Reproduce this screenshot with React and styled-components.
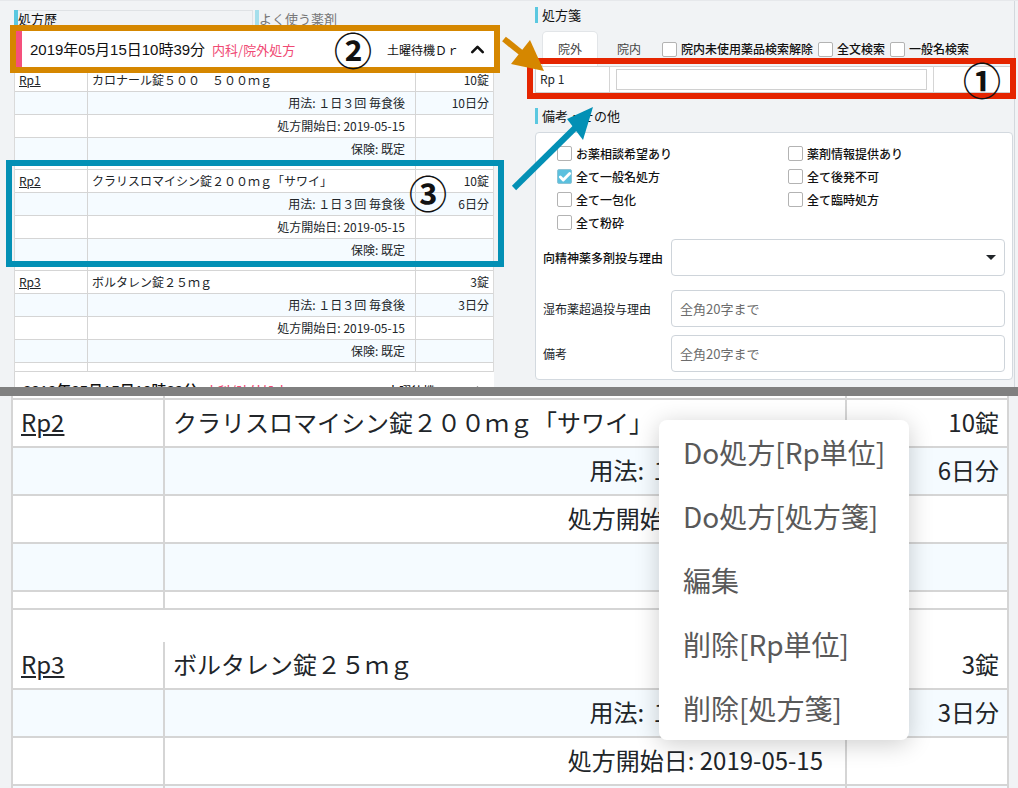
import React from "react";
import styled, { createGlobalStyle } from "styled-components";
import { Check, ChevronUp } from "lucide-react";

const GlobalStyle = createGlobalStyle`
  * { box-sizing: border-box; }
  body {
    margin: 0;
    background: #f1f3f5;
    color: #212529;
    font-family: "Noto Sans CJK JP", "Noto Sans", sans-serif;
    font-size: 12px;
    line-height: 16px;
  }
  button, input, select { font: inherit; color: inherit; }
`;

const Page = styled.main`
  display: flex;
  flex-direction: column;
  height: 100vh;
  overflow: hidden;
`;

const Overview = styled.section`
  position: relative;
  flex: none;
  height: 387px;
  overflow: hidden;
  display: grid;
  grid-template-columns: minmax(0, 1fr) minmax(0, 1fr);
  column-gap: 41px;
  padding: 0 3px 0 14px;
  border-top: 1px solid #e6e8eb;
`;

const Divider = styled.hr`
  flex: none;
  width: 100%;
  height: 9px;
  margin: 0;
  border: 0;
  background: #808080;
`;

/* History column */

const History = styled.div`
  position: relative;
  padding-top: 9px;
`;

const HistoryTabs = styled.div`
  display: grid;
  grid-template-columns: 1fr 1fr;
  column-gap: 2px;
`;

const HistoryTab = styled.button`
  height: 21px;
  padding: 0 0 4px;
  text-align: left;
  font-size: 13px;
  line-height: 16px;
  border: 0;
  border-left: 4px solid ${(p) => (p.$active ? "#5bc8e0" : "#a5dfec")};
  background: none;
  color: ${(p) => (p.$active ? "#111" : "#777")};
  box-shadow: ${(p) => (p.$active ? "inset -1px 1px #dfe2e5" : "none")};
`;

const VisitHeader = styled.header`
  position: relative;
  display: flex;
  align-items: center;
  height: 37px;
  margin-left: ${(p) => (p.$open ? "2px" : "0")};
  padding: 0 6px 0 8px;
  background: #fff;
  border-left: ${(p) => (p.$open ? "6px solid #f5507c" : "1px solid #d6d6d6")};
  color: #111;
  font-weight: ${(p) => (p.$open ? 400 : 500)};
`;

const VisitDate = styled.span`
  font-family: "Liberation Sans", "Noto Sans CJK JP", sans-serif;
  font-size: 15px;
  white-space: nowrap;
`;

const VisitKind = styled.span`
  flex: 1;
  margin-left: 7px;
  font-size: 13px;
  color: #f04a74;
  white-space: nowrap;
`;

const Doctor = styled.span`
  width: 72px;
  white-space: nowrap;
`;

const Toggle = styled.button`
  display: grid;
  margin-left: 8px;
  padding: 0;
  border: 0;
  background: none;
`;

const RxTable = styled.table`
  width: 100%;
  table-layout: fixed;
  border-collapse: separate;
  border-spacing: 0;
  background: #fff;
  border: solid ${(p) => (p.$large ? "#d5d5d5" : "#dadada")};
  border-width: ${(p) => (p.$large ? "0 2px" : "1px 1px 0")};
  font-size: ${(p) => (p.$large ? "24px" : "12px")};
  line-height: ${(p) => (p.$large ? "32px" : "16px")};

  td {
    height: ${(p) => (p.$large ? "48px" : "23px")};
    padding: ${(p) => (p.$large ? "0 8px 2px" : "0 4px")};
    border-bottom: ${(p) => (p.$large ? "2px" : "1px")} solid #d5d5d5;
    white-space: nowrap;
  }
  td + td { border-left: ${(p) => (p.$large ? "2px" : "1px")} solid #d5d5d5; }
`;

const LabelCol = styled.col`
  width: ${(p) => (p.$large ? "150px" : "72px")};
`;

const AmountCol = styled.col`
  width: ${(p) => (p.$large ? "162px" : "78px")};
`;

const Row = styled.tr`
  background: ${(p) => (p.$tint ? "#f5fbff" : "#fff")};
`;

const SpacerRow = styled.tr`
  && td { height: ${(p) => p.$height}px; padding: 0; line-height: 0; }
`;

const BlankRow = styled.tr`
  && td { height: 32px; border: 0; }
`;

const DetailCell = styled.td`
  && { text-align: right; padding-right: ${(p) => (p.$large ? "22px" : "10px")}; }
`;

const AmountCell = styled.td`
  text-align: right;
`;

const RxLink = styled.a`
  color: inherit;
  text-decoration: underline;
`;

/* Prescription column */

const Prescription = styled.div`
  padding: 6px 1px 0 0;
  border-right: 1px solid #d3d8dd;
`;

const SectionTitle = styled.h2`
  margin: 0;
  padding-left: 4px;
  border-left: 3px solid #5bc8e0;
  font-size: 13px;
  line-height: 16px;
  font-weight: 400;
  color: #111;
`;

const Toolbar = styled.div`
  display: flex;
  align-items: flex-end;
  gap: 5px;
  height: 43px;
  padding-left: 8px;
`;

const PlaceTab = styled.button`
  width: 54px;
  height: 34px;
  padding: 0;
  border: 0;
  border-radius: 4px 4px 0 0;
  background: ${(p) => (p.$active ? "#fff" : "none")};
  box-shadow: ${(p) => (p.$active ? "0 0 0 1px #e2e5e8" : "none")};
  color: #444;
`;

const ToolbarChecks = styled.div`
  display: flex;
  gap: 5px;
  height: 34px;
  align-items: center;
  margin-left: 1px;
`;

const CheckLabel = styled.label`
  display: flex;
  align-items: center;
  gap: 4px;
  white-space: nowrap;
  color: #111;
  font-weight: 500;
`;

const CheckSlot = styled.span`
  display: grid;
  place-items: center;
  > * { grid-area: 1 / 1; }
  svg { pointer-events: none; }
`;

const CheckInput = styled.input`
  appearance: none;
  width: 15px;
  height: 15px;
  margin: 0;
  border: 1px solid #b3b3b3;
  border-radius: 2px;
  background: #fff;
  &:checked { background: #5bc0de; border-color: #8dc4d6; }
`;

const RxEntry = styled.div`
  position: relative;
  display: grid;
  grid-template-columns: 73px 1fr 78px;
  height: 27px;
  background: #fff;
  border: 1px solid #d0d0d0;
  margin-bottom: 15px;
`;

const EntryLabel = styled.label`
  padding: 4px;
`;

const EntryField = styled.div`
  padding: 2px 6px;
  border: solid #d5d5d5;
  border-width: 0 1px;
  input {
    display: block;
    width: 100%;
    height: 21px;
    border: 1px solid #d0d0d0;
  }
`;

const Card = styled.div`
  margin-top: 8px;
  padding: 9px 7px 7px;
  background: #fff;
  border: 1px solid #d3d9df;
  border-radius: 4px;
`;

const OptionGrid = styled.div`
  display: grid;
  grid-template-columns: 1fr 1fr;
  grid-auto-rows: 23px;
  column-gap: 14px;
  padding-left: 14px;
  margin-bottom: 5px;
`;

const Field = styled.div`
  display: grid;
  grid-template-columns: 128px 1fr;
  align-items: center;
  margin-top: ${(p) => p.$gap || 0}px;
`;

const fieldBox = `
  width: 100%;
  height: 37px;
  padding: 0 8px;
  border: 1px solid #ced4da;
  border-radius: 4px;
  background: #fff;
  font-size: 13px;
`;

const TextField = styled.input`
  ${fieldBox}
  &::placeholder { color: #6c6c6c; opacity: 1; }
`;

const SelectWrap = styled.div`
  display: grid;
  align-items: center;
  > * { grid-area: 1 / 1; }
  svg { justify-self: end; margin-right: 9px; pointer-events: none; }
`;

const Select = styled.select`
  ${fieldBox}
  appearance: none;
`;

/* Annotations laid over the form */

const Frame = styled.div`
  position: absolute;
  inset: ${(p) => p.$inset};
  height: ${(p) => p.$height};
  border: 6px solid ${(p) => p.$color};
  pointer-events: none;
`;

const Marker = styled.b`
  position: absolute;
  top: ${(p) => p.$top};
  right: ${(p) => p.$right};
  width: 40px;
  height: 40px;
  font-size: 38px;
  line-height: 40px;
  font-weight: 700;
  text-align: center;
  color: #111;
`;

const Arrows = styled.svg`
  position: absolute;
  top: -1px;
  left: calc(50% - 9px);
`;

/* Enlarged list with its context menu */

const Detail = styled.section`
  position: relative;
  flex: 1;
  min-height: 0;
  overflow: hidden;
  padding: 0 9px 0 11px;
`;

const Menu = styled.div`
  position: absolute;
  top: 24px;
  right: 109px;
  width: 250px;
  display: flex;
  flex-direction: column;
  background: #fff;
  border-radius: 8px;
  box-shadow: 0 4px 24px rgba(0, 0, 0, 0.2);
`;

const MenuItem = styled.button`
  height: 64px;
  padding: 0 0 0 24px;
  border: 0;
  background: none;
  text-align: left;
  font-size: 28px;
  line-height: 40px;
  color: #595959;
  white-space: nowrap;
`;

const drugs = [
  { id: "Rp1", name: "カロナール錠５００　５００ｍｇ", amount: "10錠", days: "10日分" },
  { id: "Rp2", name: "クラリスロマイシン錠２００ｍｇ「サワイ」", amount: "10錠", days: "6日分" },
  { id: "Rp3", name: "ボルタレン錠２５ｍｇ", amount: "3錠", days: "3日分" },
];

const menuItems = ["Do処方[Rp単位]", "Do処方[処方箋]", "編集", "削除[Rp単位]", "削除[処方箋]"];

const options = [
  ["お薬相談希望あり"],
  ["薬剤情報提供あり"],
  ["全て一般名処方", true],
  ["全て後発不可"],
  ["全て一包化"],
  ["全て臨時処方"],
  ["全て粉砕"],
];

function CheckBox({ label, checked }) {
  return (
    <CheckLabel>
      <CheckSlot>
        <CheckInput type="checkbox" defaultChecked={checked} />
        {checked && <Check size={14} strokeWidth={5} color="#fff" />}
      </CheckSlot>
      {label}
    </CheckLabel>
  );
}

function Spacer({ height }) {
  return (
    <SpacerRow $height={height}>
      <td />
      <td />
      <td />
    </SpacerRow>
  );
}

function DrugRows({ drug, large }) {
  return (
    <>
      <Row>
        <td><RxLink href="#">{drug.id}</RxLink></td>
        <td>{drug.name}</td>
        <AmountCell>{drug.amount}</AmountCell>
      </Row>
      <Row $tint>
        <td />
        <DetailCell $large={large}>用法: １日３回 毎食後</DetailCell>
        <AmountCell>{drug.days}</AmountCell>
      </Row>
      <Row>
        <td />
        <DetailCell $large={large}>処方開始日: 2019-05-15</DetailCell>
        <td />
      </Row>
      <Row $tint>
        <td />
        <DetailCell $large={large}>{large ? "" : "保険: 既定"}</DetailCell>
        <td />
      </Row>
      <Spacer height={large ? 18 : 9} />
    </>
  );
}

function Columns({ large }) {
  return (
    <colgroup>
      <LabelCol $large={large} />
      <col />
      <AmountCol $large={large} />
    </colgroup>
  );
}

function Visit({ open }) {
  return (
    <VisitHeader $open={open}>
      <VisitDate>2019年05月15日10時39分</VisitDate>
      <VisitKind>内科/院外処方</VisitKind>
      <Doctor>土曜待機Ｄｒ</Doctor>
      <Toggle aria-label="開閉">
        <ChevronUp size={21} strokeWidth={3} />
      </Toggle>
      {open && <Frame $inset="-6px -6px auto -12px" $height="48px" $color="#d58700" />}
      {open && <Marker $top="-2px" $right="121px">②</Marker>}
    </VisitHeader>
  );
}

export default function App() {
  return (
    <Page>
      <GlobalStyle />
      <Overview>
        <History>
          <HistoryTabs>
            <HistoryTab $active>処方歴</HistoryTab>
            <HistoryTab>よく使う薬剤</HistoryTab>
          </HistoryTabs>
          <Visit open />
          <RxTable>
            <Columns />
            <tbody>
              {drugs.map((d) => <DrugRows key={d.id} drug={d} />)}
            </tbody>
          </RxTable>
          <Visit />
          <Frame $inset="159px -10px auto -8px" $height="107px" $color="#0390b5" />
          <Marker $top="171px" $right="46px">③</Marker>
        </History>

        <Prescription>
          <SectionTitle>処方箋</SectionTitle>
          <Toolbar>
            <PlaceTab $active>院外</PlaceTab>
            <PlaceTab>院内</PlaceTab>
            <ToolbarChecks>
              <CheckBox label="院内未使用薬品検索解除" />
              <CheckBox label="全文検索" />
              <CheckBox label="一般名検索" />
            </ToolbarChecks>
          </Toolbar>
          <RxEntry>
            <EntryLabel htmlFor="rp">Rp 1</EntryLabel>
            <EntryField><input id="rp" type="text" /></EntryField>
            <Frame $inset="-9px -4px auto -9px" $height="41px" $color="#e52500" />
            <Marker $top="-8px" $right="10px">①</Marker>
          </RxEntry>
          <SectionTitle>備考・その他</SectionTitle>
          <Card>
            <OptionGrid>
              {options.map(([label, checked]) => (
                <CheckBox key={label} label={label} checked={checked} />
              ))}
            </OptionGrid>
            <Field>
              <CheckLabel htmlFor="psych">向精神薬多剤投与理由</CheckLabel>
              <SelectWrap>
                <Select id="psych" />
                <svg width="10" height="5" viewBox="0 0 10 5" aria-hidden="true">
                  <path d="M0 0h10L5 5z" fill="#212529" />
                </svg>
              </SelectWrap>
            </Field>
            <Field $gap={14}>
              <label htmlFor="patch">湿布薬超過投与理由</label>
              <TextField id="patch" placeholder="全角20字まで" />
            </Field>
            <Field $gap={8}>
              <label htmlFor="note">備考</label>
              <TextField id="note" placeholder="全角20字まで" />
            </Field>
          </Card>
        </Prescription>

        <Arrows width="100" height="200" viewBox="500 0 100 200" aria-hidden="true">
          <path d="M504 39L524 55" stroke="#d58700" strokeWidth="6" />
          <path d="M544 71L530 40L511 64z" fill="#d58700" />
          <path d="M514 188L578 125" stroke="#0390b5" strokeWidth="6" />
          <path d="M593 107L567 119L583 140z" fill="#0390b5" />
        </Arrows>
      </Overview>

      <Divider />

      <Detail>
        <RxTable $large>
          <Columns large />
          <tbody>
            <Spacer height={4} />
            <DrugRows drug={drugs[1]} large />
            <BlankRow><td colSpan={3} /></BlankRow>
            <DrugRows drug={drugs[2]} large />
          </tbody>
        </RxTable>
        <Menu role="menu">
          {menuItems.map((item) => (
            <MenuItem key={item} role="menuitem">{item}</MenuItem>
          ))}
        </Menu>
      </Detail>
    </Page>
  );
}
